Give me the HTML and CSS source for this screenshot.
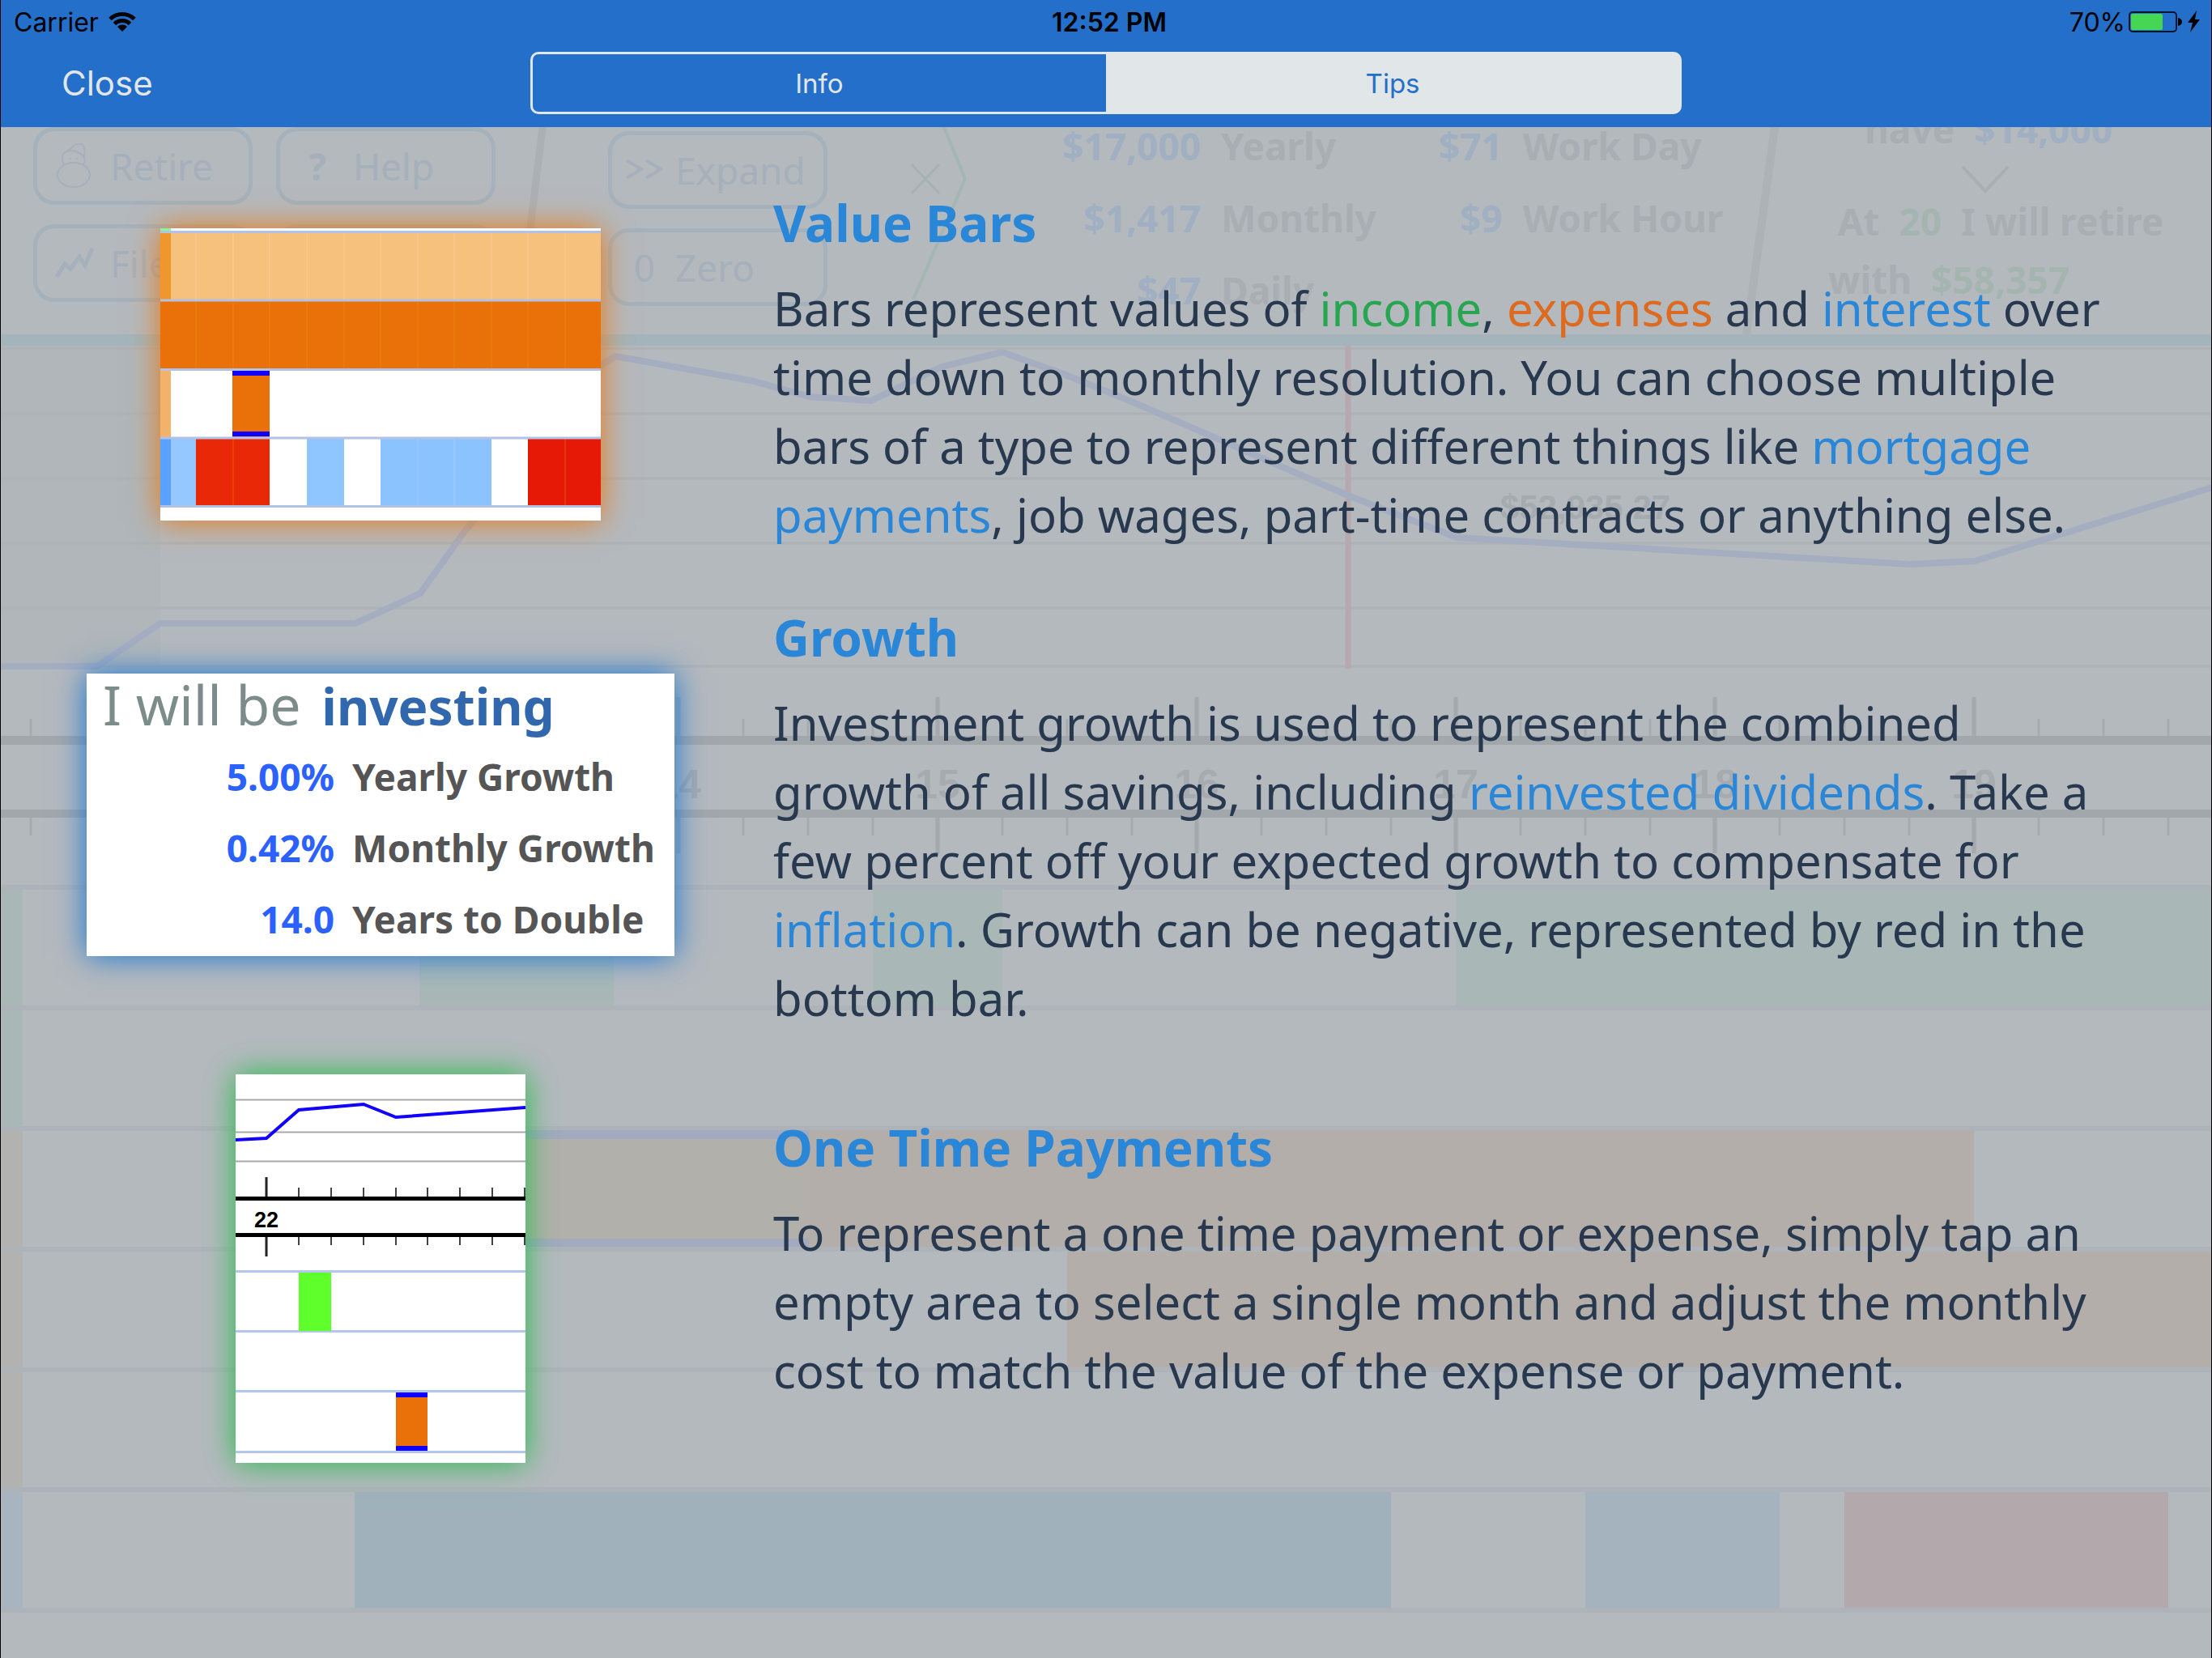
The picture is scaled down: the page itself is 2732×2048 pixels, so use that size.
FILE: index.html
```
<!DOCTYPE html>
<html lang="en">
<head>
<meta charset="utf-8">
<meta name="viewport" content="width=device-width, initial-scale=1">
<title>Tips</title>
<link rel="stylesheet" href="styles.css">
</head>
<body>
<div class="screen">

  <!-- Planner left visible, dimmed, beneath the tips sheet -->
  <div class="backdrop" inert>
    <svg class="backdrop-chart" viewBox="1 0 2730 2048" preserveAspectRatio="xMidYMin slice" aria-hidden="true">
      <g fill="none">
        <path d="M671 150L639 413" stroke="#abb0b5" stroke-width="9"/>
        <path d="M2193 150L2157 413" stroke="#adb2b6" stroke-width="10"/>
        <path d="M1163 150L1192 221L1128 370" stroke="#a4b6b4" stroke-width="4"/>
        <path d="M1126 203L1160 239M1160 203L1126 239" stroke="#a4b2b3" stroke-width="3"/>
        <path d="M2424 206L2452 236L2480 206" stroke="#a9aeb2" stroke-width="4"/>
      </g>
      <rect y="427" width="198" height="396" fill="#b0b6ba"/>
      <rect y="413" width="2732" height="14" fill="#a3b5bb"/>
      <path d="M0 430.500H2732M0 511H2732M0 591H2732M0 671H2732M0 751H2732M0 823H2732" stroke="#adb2b6" stroke-width="3"/>
      <path d="M1665 427V826" stroke="#b5a9ae" stroke-width="7"/>
      <path d="M0 823H120L198 770H439L519 733L575 655L742 451L760 440L927 470L1000 490L1076 495L1163 453L1238 435L1316 463L1400 497L1665 612L1799 664L2359 697L2439 693L2732 602" fill="none" stroke="#a5adc1" stroke-width="8"/>
      <text class="chart-label" x="1958" y="641" font-size="42">$52,935.27</text>

      <path d="M38 888V909M118 888V909M278 888V909M358 888V909M438 888V909M598 888V909M678 888V909M758 888V909M918 888V909M998 888V909M1078 888V909M1238 888V909M1318 888V909M1398 888V909M1558 888V909M1638 888V909M1718 888V909M1878 888V909M1958 888V909M2038 888V909M2198 888V909M2278 888V909M2358 888V909M2518 888V909M2598 888V909M2678 888V909" stroke="#a6abaf" stroke-width="3"/>
      <path d="M38 1010V1032M118 1010V1032M278 1010V1032M358 1010V1032M438 1010V1032M598 1010V1032M678 1010V1032M758 1010V1032M918 1010V1032M998 1010V1032M1078 1010V1032M1238 1010V1032M1318 1010V1032M1398 1010V1032M1558 1010V1032M1638 1010V1032M1718 1010V1032M1878 1010V1032M1958 1010V1032M2038 1010V1032M2198 1010V1032M2278 1010V1032M2358 1010V1032M2518 1010V1032M2598 1010V1032M2678 1010V1032" stroke="#a6abaf" stroke-width="3"/>
      <path d="M198 861V1054M518 861V909M518 1010V1054M838 861V909M838 1010V1054M1158 861V909M1158 1010V1054M1478 861V909M1478 1010V1054M1798 861V909M1798 1010V1054M2118 861V909M2118 1010V1054M2438 861V909M2438 1010V1054" stroke="#a4a9ad" stroke-width="5"/>
      <rect y="909" width="2732" height="11" fill="#a2a7ab"/>
      <rect y="1000" width="2732" height="10" fill="#a2a7ab"/>
      <g class="chart-label" font-size="50">
        <text x="838" y="986">14</text>
        <text x="1158" y="986">15</text>
        <text x="1478" y="986">16</text>
        <text x="1798" y="986">17</text>
        <text x="2118" y="986">18</text>
        <text x="2438" y="986">19</text>
      </g>

      <path d="M0 1096H2732M0 1245H2732M0 1394H2732M0 1543H2732M0 1692H2732M0 1840H2732M0 1989H2732" stroke="#aeb3b9" stroke-width="6"/>
      <g fill="#a9b8b6">
        <rect y="1099" width="28" height="143"/>
        <rect y="1248" width="28" height="143"/>
        <rect x="518" y="1099" width="240" height="143"/>
        <rect x="1078" y="1099" width="160" height="143"/>
        <rect x="1798" y="1099" width="934" height="143"/>
      </g>
      <g fill="#b2b2b1">
        <rect y="1397" width="28" height="143"/>
        <rect y="1546" width="28" height="143"/>
        <rect y="1695" width="28" height="142"/>
      </g>
      <rect x="518" y="1397" width="481" height="143" fill="#b2b0ab"/>
      <rect x="518" y="1396" width="481" height="11" fill="#a3aabf"/>
      <rect x="518" y="1530" width="481" height="10" fill="#a3aabf"/>
      <rect x="999" y="1396" width="1439" height="144" fill="#b3aeaa"/>
      <rect x="1318" y="1546" width="1414" height="143" fill="#b3aeaa"/>
      <rect y="1843" width="28" height="143" fill="#a8b4c0"/>
      <rect x="438" y="1843" width="1280" height="143" fill="#a0b1bc"/>
      <rect x="1958" y="1843" width="240" height="143" fill="#a4b3bd"/>
      <rect x="2278" y="1843" width="400" height="143" fill="#b3a8ac"/>
    </svg>

    <div class="planner-bar">
      <div class="actions">
        <button type="button" class="action"><svg class="action-icon" viewBox="0 0 48 56"><g fill="none" stroke="currentColor" stroke-width="2"><ellipse cx="23" cy="39" rx="20" ry="15"/><path d="M11 27Q5 13 15 10Q22 7 32 13Q39 18 35 27M14 10L20 6Q26 -1 33 1Q38 4 36 16L24 9M19 18v2M27 18v2M18 24h10"/></g></svg>Retire</button>
        <button type="button" class="action"><b class="action-icon">?</b>Help</button>
        <button type="button" class="action"><svg class="action-icon" viewBox="0 0 48 56"><path d="M2 45L12 29L19 35L30 20L37 31L46 10" fill="none" stroke="currentColor" stroke-width="5"/></svg>File</button>
        <button type="button" class="action">Save</button>
      </div>
      <div class="actions actions-single">
        <button type="button" class="action"><svg class="action-icon" viewBox="0 0 48 56"><path d="M2 16L20 27L2 38M26 16L44 27L26 38" fill="none" stroke="currentColor" stroke-width="4"/></svg>Expand</button>
        <button type="button" class="action"><span class="action-icon">0</span>Zero</button>
      </div>
      <table class="rates">
        <tr><td class="money">$17,000</td><th>Yearly</th><td class="money">$71</td><th>Work Day</th></tr>
        <tr><td class="money">$1,417</td><th>Monthly</th><td class="money">$9</td><th>Work Hour</th></tr>
        <tr><td class="money">$47</td><th>Daily</th><td></td><th></th></tr>
      </table>
      <div class="summary">
        <p>have &nbsp;<span class="money">$14,000</span></p>
        <p class="summary-retire">At &nbsp;<span class="gain">20</span> &nbsp;I will retire</p>
        <p class="summary-with">with &nbsp;<span class="gain">$58,357</span></p>
      </div>
    </div>
  </div>

  <header class="topbar">
    <div class="status">
      <span class="status-side">Carrier
        <svg class="wifi" viewBox="0 0 34 26" aria-label="Wi-Fi"><g fill="none" stroke="#000" stroke-width="5"><path d="M2 9.500A21.500 21.500 0 0 1 32 9.500"/><path d="M7.500 15.500A13.500 13.500 0 0 1 26.500 15.500"/></g><path d="M17 25L11 19A8.500 8.500 0 0 1 23 19Z"/></svg>
      </span>
      <time class="status-time">12:52 PM</time>
      <span class="status-side status-right">70%
        <svg class="battery" viewBox="0 0 90 28" aria-label="Charging"><rect x="1" y="2" width="58" height="24" rx="4" fill="none" stroke="#04152c" stroke-width="2"/><rect x="3" y="4" width="39" height="20" rx="2" fill="#45d753"/><path d="M61 9Q66 10 66 14T61 19Z"/><path d="M84 0L73 15H79L76 27L88 11H82Z"/></svg>
      </span>
    </div>
    <nav class="nav">
      <button type="button" class="close">Close</button>
      <div class="segments">
        <button type="button" class="segment">Info</button>
        <button type="button" class="segment segment-on" aria-pressed="true">Tips</button>
      </div>
    </nav>
  </header>

  <main class="tips">
    <section class="tip tip-bars">
      <div class="shot">
        <svg class="card card-orange" width="544" height="361" viewBox="0 0 544 361" role="img" aria-label="Value bars">
          <rect width="544" height="361" fill="#fff"/>
          <rect width="13" height="3" fill="#8cf596"/>
          <rect y="6" width="544" height="82" fill="#f5c17d"/>
          <rect y="6" width="13" height="82" fill="#ef962d"/>
          <rect y="90" width="544" height="83" fill="#ea700a"/>
          <rect y="176" width="13" height="82" fill="#f2b269"/>
          <rect x="89" y="176" width="46" height="82" fill="#ea700a"/>
          <rect x="89" y="176" width="46" height="6" fill="#1200ff"/>
          <rect x="89" y="251" width="46" height="6" fill="#1200ff"/>
          <rect y="260" width="13" height="82" fill="#59a2ff"/>
          <rect x="13" y="260" width="31" height="82" fill="#94c8ff"/>
          <rect x="44" y="260" width="91" height="82" fill="#e92807"/>
          <rect x="181" y="260" width="46" height="82" fill="#8fc6ff"/>
          <rect x="272" y="260" width="137" height="82" fill="#8ac3ff"/>
          <rect x="454" y="260" width="90" height="82" fill="#e61907"/>
          <path d="M44 6V88M90 6V88M135 6V88M181 6V88M227 6V88M272 6V88M318 6V88M363 6V88M409 6V88M454 6V88M500 6V88M318 260V342M363 260V342" stroke="#fff" stroke-opacity=".2"/>
          <path d="M44 90V173M90 90V173M135 90V173M181 90V173M227 90V173M272 90V173M318 90V173M363 90V173M409 90V173M454 90V173M500 90V173M90 260V342M500 260V342" stroke="#f0a010" stroke-opacity=".4"/>
          <path d="M0 4.500H544M0 89H544M0 174.500H544M0 259H544M0 343.500H544" stroke="#b2c1e6" stroke-width="3"/>
        </svg>
      </div>
      <div class="copy">
        <h2>Value Bars</h2>
        <p>Bars represent values of <span class="green">income</span>, <span class="orange">expenses</span> and <span class="blue">interest</span> over time down to monthly resolution. You can choose multiple bars of a type to represent different things like <span class="blue">mortgage payments</span>, job wages, part-time contracts or anything else.</p>
      </div>
    </section>

    <section class="tip tip-growth">
      <div class="shot">
        <div class="card card-blue">
          <p class="invest">I will be <b>investing</b></p>
          <table class="growth">
            <tr><td>5.00%</td><th>Yearly Growth</th></tr>
            <tr><td>0.42%</td><th>Monthly Growth</th></tr>
            <tr><td>14.0</td><th>Years to Double</th></tr>
          </table>
        </div>
      </div>
      <div class="copy">
        <h2>Growth</h2>
        <p>Investment growth is used to represent the combined growth of all savings, including <span class="blue">reinvested dividends</span>. Take a few percent off your expected growth to compensate for <span class="blue">inflation</span>. Growth can be negative, represented by red in the bottom bar.</p>
      </div>
    </section>

    <section class="tip tip-payments">
      <div class="shot">
        <svg class="card card-green" width="358" height="480" viewBox="0 0 358 480" role="img" aria-label="One time payment on the timeline">
          <rect width="358" height="480" fill="#fff"/>
          <path d="M0 31.500H358M0 71.500H358M0 107.500H358" stroke="#a8a8a8" stroke-width="2"/>
          <path d="M0 81L38 79L78 44L158 37L198 53L358 41" fill="none" stroke="#1200ff" stroke-width="4"/>
          <path d="M78 140V151M118 140V151M158 140V151M198 140V151M237 140V151M277 140V151M317 140V151M357 140V151M78 201V211M118 201V211M158 201V211M198 201V211M237 201V211M277 201V211M317 201V211M357 201V211" stroke="#444" stroke-width="2"/>
          <path d="M38 127V151M38 201V225" stroke="#222" stroke-width="3"/>
          <rect y="151" width="358" height="5"/>
          <rect y="196" width="358" height="5"/>
          <text class="year" x="38" y="189" font-size="27">22</text>
          <path d="M0 243.500H358M0 317.500H358M0 391.500H358M0 466.500H358" stroke="#b3c6ec" stroke-width="3"/>
          <rect x="78" y="245" width="40" height="72" fill="#5eff2b"/>
          <rect x="198" y="393" width="39" height="72" fill="#ea700a"/>
          <rect x="198" y="393" width="39" height="6" fill="#1200ff"/>
          <rect x="198" y="459" width="39" height="6" fill="#1200ff"/>
        </svg>
      </div>
      <div class="copy">
        <h2>One Time Payments</h2>
        <p>To represent a one time payment or expense, simply tap an empty area to select a single month and adjust the monthly cost to match the value of the expense or payment.</p>
      </div>
    </section>
  </main>
</div>
</body>
</html>
```
FILE: styles.css
```
* { box-sizing: border-box; }

body {
  margin: 0;
  background: #b4b9be;
  color: #28394f;
  font-family: "Noto Sans", "Open Sans", sans-serif;
}

h2, p { margin: 0; }

button {
  margin: 0;
  padding: 0;
  border: 0;
  background: none;
  color: inherit;
  font: inherit;
}

.screen {
  position: relative;
  min-height: 100vh;
  border: solid #000;
  border-width: 0 1px;
  overflow: hidden;
}

/* Header */

.topbar {
  position: relative;
  height: 157px;
  background: #246fc9;
  font-family: Inter, "Liberation Sans", sans-serif;
}

.status {
  display: grid;
  grid-template-columns: 1fr auto 1fr;
  align-items: center;
  height: 54px;
  padding: 0 12px 0 16px;
  color: #000;
  font-size: 32px;
}

.status-side { display: flex; align-items: center; gap: 12px; }
.status-right { justify-content: flex-end; gap: 4px; }
.status-time { padding-left: 4px; font-weight: 600; }
.wifi { width: 34px; height: 26px; }
.battery { width: 90px; height: 28px; }

.nav {
  display: grid;
  grid-template-columns: 1fr 52.1% 1fr;
  padding-top: 10px;
}

.close {
  justify-self: start;
  padding-left: 75px;
  color: #e1e6e8;
  font-size: 42px;
  line-height: 74px;
}

.segments {
  display: grid;
  grid-template-columns: 1fr 1fr;
  height: 77px;
  border: 3px solid #e1e6e8;
  border-radius: 10px;
}

.segment { color: #e1e6e8; font-size: 33px; }
.segment-on { background: #e1e6e8; color: #246fc9; }

/* Tips */

.tips {
  position: relative;
  display: flex;
  flex-direction: column;
  gap: 28px;
  padding: 76px 120px 0 0;
}

.tip {
  display: grid;
  grid-template-columns: 938px 1fr;
  column-gap: 16px;
  align-items: center;
}

.tip-bars { margin-bottom: 39px; }
.tip-bars .shot { margin-top: 14px; }
.tip-growth .shot { margin-bottom: 8px; }
.tip-payments .shot { margin-top: 24px; }

.shot { display: flex; justify-content: center; }
.card { display: block; background: #fff; }
.card-orange { box-shadow: 0 0 36px #ea7810; }
.card-blue { box-shadow: 0 0 36px #1673d2; }
.card-green { box-shadow: 0 0 36px #20bd46; }

.copy h2 {
  margin-bottom: 20px;
  color: #2a86d6;
  font-size: 62px;
  font-weight: 700;
  line-height: 85px;
}

.copy p { font-size: 58px; line-height: 85px; }

.green { color: #27a550; }
.orange { color: #dd6a1e; }
.blue { color: #2a86d6; }

.card-blue { width: 726px; height: 349px; }

.invest {
  padding-left: 20px;
  margin-bottom: 5px;
  color: #7b8c8a;
  font-size: 68px;
  line-height: 76px;
}

.invest b { margin-left: 8px; color: #3168ad; font-size: 62px; }

.growth { border-collapse: collapse; font-size: 46px; line-height: 88px; }
.growth td, .growth th { padding: 0; font-weight: 700; text-align: left; }
.growth td { width: 306px; color: #2b62ff; text-align: right; }
.growth th { padding-left: 22px; color: #555; white-space: nowrap; }

.year, .chart-label {
  font-family: "Liberation Sans", Arial, sans-serif;
  font-weight: 700;
  text-anchor: middle;
}

.chart-label { fill: #a6abaf; }

/* Dimmed planner */

.backdrop { position: absolute; inset: 0; }
.backdrop-chart { position: absolute; width: 100%; height: 100%; }

.planner-bar {
  position: relative;
  display: grid;
  grid-template-columns: 640fr 580fr 960fr 550fr;
  height: 413px;
  color: #a9aeb2;
  font-size: 46px;
}

.actions {
  display: grid;
  grid-template-columns: 271px 271px;
  grid-auto-rows: 96px;
  gap: 24px 29px;
  padding: 157px 0 0 40px;
}

.actions-single { grid-template-columns: 271px; padding: 162px 0 0 110px; }

.action {
  display: flex;
  align-items: center;
  gap: 20px;
  padding-left: 22px;
  border: 5px solid #a5b1bb;
  border-radius: 26px;
  color: #a5b0ba;
}

.actions-single .action { gap: 14px; padding-left: 16px; }
.action-icon { width: 48px; height: 56px; line-height: 56px; text-align: center; }

.rates {
  align-self: start;
  margin-top: 136px;
  border-collapse: collapse;
  line-height: 89px;
}

.rates td, .rates th { padding: 0; font-weight: 700; text-align: left; }
.rates td { width: 114px; text-align: right; }
.rates td:first-child { width: 262px; }
.rates th { padding-left: 25px; white-space: nowrap; }

.money { color: #a0afc1; }
.gain { color: #a4b5b0; }

.summary { padding-top: 119px; font-weight: 700; line-height: 80px; text-align: center; }
.summary-retire { margin-top: 34px; padding-left: 30px; }
.summary-with { margin-top: -8px; padding-right: 98px; }
```
